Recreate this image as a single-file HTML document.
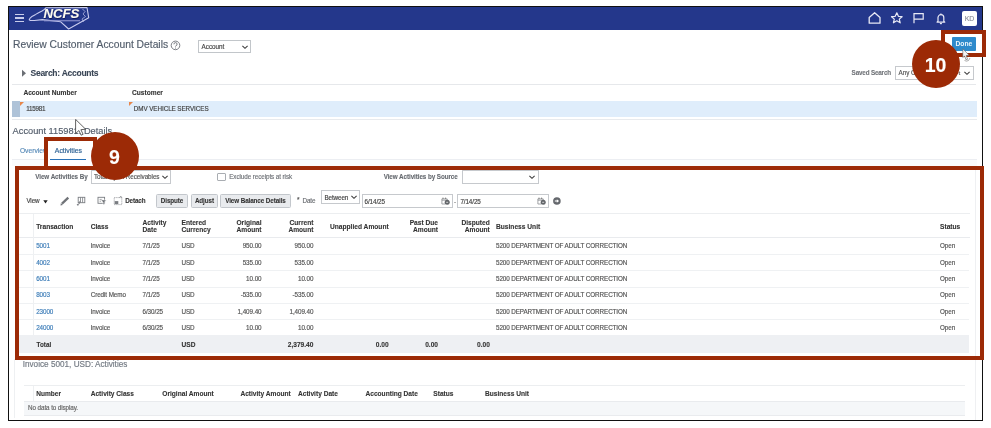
<!DOCTYPE html>
<html><head><meta charset="utf-8"><style>
html,body{margin:0;padding:0;}
body{width:991px;height:428px;overflow:hidden;position:relative;background:#fff;font-family:"Liberation Sans", sans-serif;}
.t{position:absolute;line-height:1;white-space:pre;-webkit-text-stroke:0.16px currentColor;}
#root{position:absolute;left:0;top:0;width:991px;height:428px;will-change:transform;}
.r{position:absolute;}
</style></head><body>
<div id="root">
<div class="r" style="left:8px;top:6px;width:975px;height:415px;border:1px solid #111;box-sizing:border-box;"></div>
<div class="r" style="left:9px;top:7px;width:973px;height:23px;background:#24378b;"></div>
<div class="r" style="left:14.6px;top:13.8px;width:9.9px;height:1.6px;background:#c9cdeb;"></div>
<div class="r" style="left:14.6px;top:17.3px;width:9.9px;height:1.6px;background:#c9cdeb;"></div>
<div class="r" style="left:14.6px;top:20.6px;width:9.9px;height:1.6px;background:#c9cdeb;"></div>
<svg class="r" style="left:26px;top:6px" width="66" height="25" viewBox="0 0 66 25">
<path d="M3.2 13.9 Q3.4 12.3 5.9 10.5 L9.7 8.4 L12.6 6.7 L16 5 L18.5 3.4 L19.8 1.8 L61 1.5 L62.7 11.7 L42.6 23 L34.7 15.8 L16.4 13.6 L8.4 14.5 Q4 14.8 3.2 13.9 Z" fill="none" stroke="#c9ccef" stroke-width="1.1" stroke-linejoin="round"/>
<path d="M56.5 3 L59 5.5 L57 8 L59.5 10.5 L56 13 L57.5 16" fill="none" stroke="#aeb3e0" stroke-width="0.8"/>
<rect x="18" y="14.2" width="36" height="1.1" fill="#8f96d0"/>
</svg>
<div class="t" style="left:43.60px;top:7.00px;font-size:13.3px;font-weight:bold;-webkit-text-stroke:0.1px currentColor;color:#ffffff;font-style:italic;text-shadow:0.5px 0.5px 0.8px #10195a;letter-spacing:-0.15px;color:#fdfbf0;">NCFS</div>
<svg class="r" style="left:866px;top:10px" width="85" height="17" viewBox="0 0 85 17">
<path d="M3.2 13.2 V7.6 L8.6 2.8 L14 7.6 V13.2 Z" fill="none" stroke="#e8e9f5" stroke-width="1.3" stroke-linejoin="round"/>
<path d="M30.8 2.8 L32.4 6.3 L36.1 6.7 L33.3 9.1 L34.2 12.8 L30.8 10.8 L27.4 12.8 L28.3 9.1 L25.5 6.7 L29.2 6.3 Z" fill="none" stroke="#e8e9f5" stroke-width="1.2" stroke-linejoin="round"/>
<path d="M48 13.2 V3.6 H57.2 V9.2 H48" fill="none" stroke="#e8e9f5" stroke-width="1.2"/>
<path d="M72 11.2 V7.6 A2.9 2.9 0 0 1 77.8 7.6 V11.2 L78.8 12.1 H71 Z" fill="none" stroke="#e8e9f5" stroke-width="1.2" stroke-linejoin="round"/>
<path d="M73.9 13.6 H75.9" stroke="#e8e9f5" stroke-width="1.2"/>
<path d="M74.9 3.4 V4.6" stroke="#e8e9f5" stroke-width="1.2"/>
</svg>
<div class="r" style="left:962px;top:10.8px;width:15px;height:14.8px;background:#fff;border-radius:2px;"></div>
<div class="t" style="left:969.50px;top:16.00px;font-size:6.9px;color:#8d909c;transform:translateX(-50%);">KD</div>
<div class="t" style="left:13.00px;top:40.00px;font-size:10.3px;color:#525d6b;">Review Customer Account Details</div>
<svg class="r" style="left:170.4px;top:40px" width="11" height="11" viewBox="0 0 11 11">
<circle cx="5.5" cy="5.4" r="4.3" fill="none" stroke="#6d7177" stroke-width="0.9"/>
<path d="M3.9 4.3 A1.6 1.6 0 1 1 5.8 5.8 Q5.5 6 5.5 6.6" fill="none" stroke="#6d7177" stroke-width="0.9"/>
<circle cx="5.5" cy="8" r="0.55" fill="#6d7177"/>
</svg>
<div class="r" style="left:198px;top:39.5px;width:52.5px;height:13.8px;border:1px solid #c2c6ca;box-sizing:border-box;background:#fff;"></div>
<div class="t" style="left:201.60px;top:44.00px;font-size:6.3px;color:#444;letter-spacing:-0.026px;">Account</div>
<svg class="r" style="left:241px;top:44px" width="8" height="6" viewBox="0 0 8 6"><path d="M1.4 1.8 L4 4.3 L6.6 1.8" fill="none" stroke="#3a3a3a" stroke-width="1.05"/></svg>
<svg class="r" style="left:21px;top:68.6px" width="6" height="9" viewBox="0 0 6 9"><path d="M1 0.8 L5 4.3 L1 7.8 Z" fill="#6b6f75"/></svg>
<div class="t" style="left:30.50px;top:69.00px;font-size:8.5px;font-weight:bold;-webkit-text-stroke:0.1px currentColor;color:#3a4656;letter-spacing:-0.26px;">Search: Accounts</div>
<div class="t" style="left:851.60px;top:70.00px;font-size:6.3px;font-weight:bold;-webkit-text-stroke:0.1px currentColor;color:#707378;letter-spacing:-0.164px;">Saved Search</div>
<div class="r" style="left:895px;top:66px;width:78.5px;height:13.7px;border:1px solid #c6c9cd;box-sizing:border-box;background:#fff;"></div>
<div class="t" style="left:898.60px;top:70.00px;font-size:6.3px;color:#555;letter-spacing:-0.054px;">Any C</div>
<div class="t" style="left:958.50px;top:70.00px;font-size:6.2px;color:#555;">t</div>
<svg class="r" style="left:963px;top:70px" width="8" height="6" viewBox="0 0 8 6"><path d="M1.4 1.8 L4 4.3 L6.6 1.8" fill="none" stroke="#3a3a3a" stroke-width="1.05"/></svg>
<div class="r" style="left:12px;top:83.8px;width:964px;height:1px;background:#e6e8eb;"></div>
<div class="t" style="left:23.40px;top:90.00px;font-size:6.64px;font-weight:bold;-webkit-text-stroke:0.1px currentColor;color:#333;">Account Number</div>
<div class="t" style="left:132.00px;top:90.00px;font-size:6.64px;font-weight:bold;-webkit-text-stroke:0.1px currentColor;color:#333;">Customer</div>
<div class="r" style="left:12px;top:100.5px;width:965px;height:16.5px;background:#dfedfb;"></div>
<div class="r" style="left:12px;top:100.5px;width:8px;height:16.5px;background:#afc3d8;"></div>
<svg class="r" style="left:20px;top:102px" width="4" height="4" viewBox="0 0 4 4"><path d="M0 0 H4 L0 4 Z" fill="#e8864a"/></svg>
<svg class="r" style="left:128.5px;top:102px" width="4" height="4" viewBox="0 0 4 4"><path d="M0 0 H4 L0 4 Z" fill="#e8864a"/></svg>
<div class="t" style="left:26.20px;top:106.00px;font-size:6.3px;color:#444;letter-spacing:-0.228px;">115981</div>
<div class="t" style="left:133.80px;top:106.00px;font-size:6.3px;color:#444;letter-spacing:-0.073px;">DMV VEHICLE SERVICES</div>
<div class="r" style="left:12px;top:119px;width:965px;height:1px;background:#e8eaed;"></div>
<div class="t" style="left:12.60px;top:127.00px;font-size:9.25px;color:#535d6b;">Account 115981: Details</div>
<div class="r" style="left:48px;top:141px;width:48px;height:25px;background:#fff;"></div>
<div class="t" style="left:19.90px;top:148.00px;font-size:6.7px;color:#5a8cb9;">Overview</div>
<div class="t" style="left:54.80px;top:148.00px;font-size:6.9px;color:#2f6396;-webkit-text-stroke:0.18px currentColor;">Activities</div>
<div class="r" style="left:50px;top:158.6px;width:36.4px;height:1.8px;background:#2a72b8;"></div>
<div class="r" style="left:12px;top:159px;width:32px;height:7px;background:#fafbfc;border-top:1px solid #eceef2;box-sizing:border-box;"></div>
<div class="r" style="left:96px;top:159px;width:881px;height:7px;background:#fafbfc;border-top:1px solid #eceef2;box-sizing:border-box;"></div>
<div class="t" style="left:35.20px;top:174.00px;font-size:6.3px;font-weight:bold;-webkit-text-stroke:0.1px currentColor;color:#65696f;letter-spacing:-0.061px;">View Activities By</div>
<div class="r" style="left:91.3px;top:170px;width:80.1px;height:13.6px;border:1px solid #c6c9cd;box-sizing:border-box;background:#fff;"></div>
<div class="t" style="left:94.00px;top:174.00px;font-size:6.3px;color:#555;letter-spacing:-0.048px;">Total Open Receivables</div>
<svg class="r" style="left:161px;top:174px" width="8" height="6" viewBox="0 0 8 6"><path d="M1.4 1.8 L4 4.3 L6.6 1.8" fill="none" stroke="#3a3a3a" stroke-width="1.05"/></svg>
<div class="r" style="left:217.3px;top:173px;width:8.7px;height:8.2px;border:1px solid #a9adb2;box-sizing:border-box;border-radius:1px;"></div>
<div class="t" style="left:229.20px;top:174.00px;font-size:6.3px;color:#6f7378;letter-spacing:-0.077px;">Exclude receipts at risk</div>
<div class="t" style="left:383.70px;top:174.00px;font-size:6.3px;font-weight:bold;-webkit-text-stroke:0.1px currentColor;color:#65696f;letter-spacing:-0.077px;">View Activities by Source</div>
<div class="r" style="left:461.8px;top:170px;width:77.3px;height:13.6px;border:1px solid #c6c9cd;box-sizing:border-box;background:#fff;"></div>
<svg class="r" style="left:528px;top:174px" width="8" height="6" viewBox="0 0 8 6"><path d="M1.4 1.8 L4 4.3 L6.6 1.8" fill="none" stroke="#3a3a3a" stroke-width="1.05"/></svg>
<div class="t" style="left:26.40px;top:198.00px;font-size:6.3px;color:#444;letter-spacing:-0.107px;">View</div>
<svg class="r" style="left:43px;top:200px" width="5" height="4" viewBox="0 0 5 4"><path d="M0.3 0.3 H4.7 L2.5 3.4 Z" fill="#222"/></svg>
<svg class="r" style="left:59px;top:196px" width="70" height="11" viewBox="0 0 70 11">
<path d="M3 7.6 L9.3 1.6" stroke="#707378" stroke-width="2.3"/>
<path d="M1.5 9.4 L1.9 7 L3.9 8.9 Z" fill="#707378"/>
<rect x="19.2" y="1.3" width="6.6" height="5.4" fill="none" stroke="#7a7d82" stroke-width="0.9"/>
<path d="M21.5 1.3 V6.7 M23.6 1.3 V6.7" stroke="#7a7d82" stroke-width="0.8"/>
<path d="M21 5 Q21 8.6 18.3 8.8" fill="none" stroke="#7a7d82" stroke-width="0.9"/>
<path d="M17.6 8.8 L19.3 7.6 L19.3 10 Z" fill="#7a7d82"/>
<rect x="39" y="1.3" width="6.6" height="6" fill="none" stroke="#7a7d82" stroke-width="0.9"/>
<path d="M40.6 3.4 H43.2 M40.6 5.2 H42" stroke="#7a7d82" stroke-width="0.7"/>
<path d="M42 3.9 H47.3 L45.3 6.2 V8.6 H44 V6.2 Z" fill="#6d7075" stroke="#fff" stroke-width="0.5"/>
<rect x="55.2" y="1.6" width="7.6" height="7" fill="none" stroke="#8a8d92" stroke-width="0.8" stroke-dasharray="1.2 0.9"/>
<rect x="55.7" y="5.1" width="3.6" height="3" fill="#7a7d82"/>
<path d="M60.3 1.6 L63 -0.5 M61.5 0.2 L63.2 2" stroke="#7a7d82" stroke-width="0.6"/>
</svg>
<div class="t" style="left:125.20px;top:198.00px;font-size:6.3px;font-weight:bold;-webkit-text-stroke:0.1px currentColor;color:#333;letter-spacing:-0.133px;">Detach</div>
<div class="r" style="left:156.3px;top:194.3px;width:31.4px;height:14.1px;border:1px solid #c3c7cc;box-sizing:border-box;background:#e9ebee;border-radius:1.5px;"></div>
<div class="t" style="left:172.00px;top:198.00px;font-size:6.3px;font-weight:bold;-webkit-text-stroke:0.1px currentColor;color:#333;letter-spacing:-0.105px;transform:translateX(-50%);white-space:nowrap;">Dispute</div>
<div class="r" style="left:190.5px;top:194.3px;width:27.8px;height:14.1px;border:1px solid #c3c7cc;box-sizing:border-box;background:#e9ebee;border-radius:1.5px;"></div>
<div class="t" style="left:204.40px;top:198.00px;font-size:6.3px;font-weight:bold;-webkit-text-stroke:0.1px currentColor;color:#333;letter-spacing:-0.104px;transform:translateX(-50%);white-space:nowrap;">Adjust</div>
<div class="r" style="left:220.4px;top:194.3px;width:70.2px;height:14.1px;border:1px solid #c3c7cc;box-sizing:border-box;background:#e9ebee;border-radius:1.5px;"></div>
<div class="t" style="left:255.50px;top:198.00px;font-size:6.3px;font-weight:bold;-webkit-text-stroke:0.1px currentColor;color:#333;letter-spacing:-0.099px;transform:translateX(-50%);white-space:nowrap;">View Balance Details</div>
<div class="t" style="left:297.00px;top:197.00px;font-size:6.5px;color:#555;">*</div>
<div class="t" style="left:302.60px;top:198.00px;font-size:6.3px;color:#6a6d72;letter-spacing:-0.158px;">Date</div>
<div class="r" style="left:321.3px;top:190.2px;width:38.3px;height:14.2px;border:1px solid #c6c9cd;box-sizing:border-box;background:#fff;"></div>
<div class="t" style="left:324.50px;top:195.00px;font-size:6.3px;color:#444;letter-spacing:-0.111px;">Between</div>
<svg class="r" style="left:350px;top:194px" width="8" height="6" viewBox="0 0 8 6"><path d="M1.4 1.8 L4 4.3 L6.6 1.8" fill="none" stroke="#3a3a3a" stroke-width="1.05"/></svg>
<div class="r" style="left:361.6px;top:194.3px;width:91.1px;height:14.1px;border:1px solid #c6c9cd;box-sizing:border-box;background:#fff;"></div>
<div class="t" style="left:364.50px;top:199.00px;font-size:6.3px;color:#444;letter-spacing:-0.095px;">6/14/25</div>
<div class="r" style="left:457.2px;top:194.3px;width:91.4px;height:14.1px;border:1px solid #c6c9cd;box-sizing:border-box;background:#fff;"></div>
<div class="t" style="left:460.40px;top:199.00px;font-size:6.3px;color:#444;letter-spacing:-0.095px;">7/14/25</div>
<div class="t" style="left:454.00px;top:199.00px;font-size:6.1px;color:#555;">-</div>
<svg class="r" style="left:440.5px;top:197px" width="10" height="10" viewBox="0 0 10 10"><path d="M4.2 7 H0.9 V1.9 H6.2 V3.2" fill="none" stroke="#8a8d92" stroke-width="0.8"/><path d="M0.9 3.2 H6.2" stroke="#8a8d92" stroke-width="0.8"/><path d="M2 0.6 V2 M4.6 0.6 V2" stroke="#777" stroke-width="0.9"/><circle cx="6.2" cy="5.2" r="2.5" fill="#626569"/><path d="M5.2 5.3 H7.2" stroke="#fff" stroke-width="0.7"/></svg>
<svg class="r" style="left:536.5px;top:197px" width="10" height="10" viewBox="0 0 10 10"><path d="M4.2 7 H0.9 V1.9 H6.2 V3.2" fill="none" stroke="#8a8d92" stroke-width="0.8"/><path d="M0.9 3.2 H6.2" stroke="#8a8d92" stroke-width="0.8"/><path d="M2 0.6 V2 M4.6 0.6 V2" stroke="#777" stroke-width="0.9"/><circle cx="6.2" cy="5.2" r="2.5" fill="#626569"/><path d="M5.2 5.3 H7.2" stroke="#fff" stroke-width="0.7"/></svg>
<svg class="r" style="left:553px;top:197px" width="8" height="8" viewBox="0 0 8 8"><circle cx="3.9" cy="4" r="3.8" fill="#65686d"/><path d="M1.8 4 H4.8" stroke="#fff" stroke-width="1.1"/><path d="M3.8 2.2 L6.1 4 L3.8 5.8 Z" fill="#fff"/></svg>
<div class="r" style="left:19px;top:213.2px;width:951px;height:1px;background:#eceef0;"></div>
<div class="r" style="left:19px;top:237.3px;width:951px;height:1px;background:#e9ebee;"></div>
<div class="r" style="left:33.2px;top:214px;width:1px;height:121px;background:#eef0f2;"></div>
<div class="t" style="left:36.20px;top:224.00px;font-size:6.64px;font-weight:bold;-webkit-text-stroke:0.1px currentColor;color:#333;">Transaction</div>
<div class="t" style="left:90.70px;top:224.00px;font-size:6.64px;font-weight:bold;-webkit-text-stroke:0.1px currentColor;color:#333;">Class</div>
<div class="t" style="left:142.50px;top:220.00px;font-size:6.64px;font-weight:bold;-webkit-text-stroke:0.1px currentColor;color:#333;">Activity</div>
<div class="t" style="left:142.50px;top:227.00px;font-size:6.64px;font-weight:bold;-webkit-text-stroke:0.1px currentColor;color:#333;">Date</div>
<div class="t" style="left:181.50px;top:220.00px;font-size:6.64px;font-weight:bold;-webkit-text-stroke:0.1px currentColor;color:#333;">Entered</div>
<div class="t" style="left:181.50px;top:227.00px;font-size:6.64px;font-weight:bold;-webkit-text-stroke:0.1px currentColor;color:#333;">Currency</div>
<div class="t" style="right:729.50px;top:220.00px;font-size:6.64px;font-weight:bold;-webkit-text-stroke:0.1px currentColor;color:#333;">Original</div>
<div class="t" style="right:729.50px;top:227.00px;font-size:6.64px;font-weight:bold;-webkit-text-stroke:0.1px currentColor;color:#333;">Amount</div>
<div class="t" style="right:677.60px;top:220.00px;font-size:6.64px;font-weight:bold;-webkit-text-stroke:0.1px currentColor;color:#333;">Current</div>
<div class="t" style="right:677.60px;top:227.00px;font-size:6.64px;font-weight:bold;-webkit-text-stroke:0.1px currentColor;color:#333;">Amount</div>
<div class="t" style="left:330.00px;top:224.00px;font-size:6.64px;font-weight:bold;-webkit-text-stroke:0.1px currentColor;color:#333;">Unapplied Amount</div>
<div class="t" style="right:553.00px;top:220.00px;font-size:6.64px;font-weight:bold;-webkit-text-stroke:0.1px currentColor;color:#333;">Past Due</div>
<div class="t" style="right:553.00px;top:227.00px;font-size:6.64px;font-weight:bold;-webkit-text-stroke:0.1px currentColor;color:#333;">Amount</div>
<div class="t" style="right:501.20px;top:220.00px;font-size:6.64px;font-weight:bold;-webkit-text-stroke:0.1px currentColor;color:#333;">Disputed</div>
<div class="t" style="right:501.20px;top:227.00px;font-size:6.64px;font-weight:bold;-webkit-text-stroke:0.1px currentColor;color:#333;">Amount</div>
<div class="t" style="left:496.00px;top:224.00px;font-size:6.64px;font-weight:bold;-webkit-text-stroke:0.1px currentColor;color:#333;">Business Unit</div>
<div class="t" style="left:940.00px;top:224.00px;font-size:6.64px;font-weight:bold;-webkit-text-stroke:0.1px currentColor;color:#333;">Status</div>
<div class="t" style="left:36.20px;top:243.00px;font-size:6.3px;color:#3d7db8;letter-spacing:-0.083px;">5001</div>
<div class="t" style="left:90.70px;top:243.00px;font-size:6.3px;color:#555;letter-spacing:-0.068px;">Invoice</div>
<div class="t" style="left:142.50px;top:243.00px;font-size:6.3px;color:#555;letter-spacing:-0.070px;">7/1/25</div>
<div class="t" style="left:181.50px;top:243.00px;font-size:6.3px;color:#555;letter-spacing:-0.106px;">USD</div>
<div class="t" style="right:729.50px;top:243.00px;font-size:6.3px;color:#555;letter-spacing:-0.076px;">950.00</div>
<div class="t" style="right:677.60px;top:243.00px;font-size:6.3px;color:#555;letter-spacing:-0.076px;">950.00</div>
<div class="t" style="left:496.00px;top:243.00px;font-size:6.3px;color:#555;letter-spacing:-0.092px;">5200 DEPARTMENT OF ADULT CORRECTION</div>
<div class="t" style="left:940.00px;top:243.00px;font-size:6.3px;color:#555;letter-spacing:-0.092px;">Open</div>
<div class="r" style="left:19px;top:253.8px;width:950px;height:1px;background:#eff1f3;"></div>
<div class="t" style="left:36.20px;top:260.00px;font-size:6.3px;color:#3d7db8;letter-spacing:-0.083px;">4002</div>
<div class="t" style="left:90.70px;top:260.00px;font-size:6.3px;color:#555;letter-spacing:-0.068px;">Invoice</div>
<div class="t" style="left:142.50px;top:260.00px;font-size:6.3px;color:#555;letter-spacing:-0.070px;">7/1/25</div>
<div class="t" style="left:181.50px;top:260.00px;font-size:6.3px;color:#555;letter-spacing:-0.106px;">USD</div>
<div class="t" style="right:729.50px;top:260.00px;font-size:6.3px;color:#555;letter-spacing:-0.076px;">535.00</div>
<div class="t" style="right:677.60px;top:260.00px;font-size:6.3px;color:#555;letter-spacing:-0.076px;">535.00</div>
<div class="t" style="left:496.00px;top:260.00px;font-size:6.3px;color:#555;letter-spacing:-0.092px;">5200 DEPARTMENT OF ADULT CORRECTION</div>
<div class="t" style="left:940.00px;top:260.00px;font-size:6.3px;color:#555;letter-spacing:-0.092px;">Open</div>
<div class="r" style="left:19px;top:270.2px;width:950px;height:1px;background:#eff1f3;"></div>
<div class="t" style="left:36.20px;top:276.00px;font-size:6.3px;color:#3d7db8;letter-spacing:-0.083px;">6001</div>
<div class="t" style="left:90.70px;top:276.00px;font-size:6.3px;color:#555;letter-spacing:-0.068px;">Invoice</div>
<div class="t" style="left:142.50px;top:276.00px;font-size:6.3px;color:#555;letter-spacing:-0.070px;">7/1/25</div>
<div class="t" style="left:181.50px;top:276.00px;font-size:6.3px;color:#555;letter-spacing:-0.106px;">USD</div>
<div class="t" style="right:729.50px;top:276.00px;font-size:6.3px;color:#555;letter-spacing:-0.075px;">10.00</div>
<div class="t" style="right:677.60px;top:276.00px;font-size:6.3px;color:#555;letter-spacing:-0.075px;">10.00</div>
<div class="t" style="left:496.00px;top:276.00px;font-size:6.3px;color:#555;letter-spacing:-0.092px;">5200 DEPARTMENT OF ADULT CORRECTION</div>
<div class="t" style="left:940.00px;top:276.00px;font-size:6.3px;color:#555;letter-spacing:-0.092px;">Open</div>
<div class="r" style="left:19px;top:286.6px;width:950px;height:1px;background:#eff1f3;"></div>
<div class="t" style="left:36.20px;top:292.00px;font-size:6.3px;color:#3d7db8;letter-spacing:-0.083px;">8003</div>
<div class="t" style="left:90.70px;top:292.00px;font-size:6.3px;color:#555;letter-spacing:-0.078px;">Credit Memo</div>
<div class="t" style="left:142.50px;top:292.00px;font-size:6.3px;color:#555;letter-spacing:-0.070px;">7/1/25</div>
<div class="t" style="left:181.50px;top:292.00px;font-size:6.3px;color:#555;letter-spacing:-0.106px;">USD</div>
<div class="t" style="right:729.50px;top:292.00px;font-size:6.3px;color:#555;letter-spacing:-0.073px;">-535.00</div>
<div class="t" style="right:677.60px;top:292.00px;font-size:6.3px;color:#555;letter-spacing:-0.073px;">-535.00</div>
<div class="t" style="left:496.00px;top:292.00px;font-size:6.3px;color:#555;letter-spacing:-0.092px;">5200 DEPARTMENT OF ADULT CORRECTION</div>
<div class="t" style="left:940.00px;top:292.00px;font-size:6.3px;color:#555;letter-spacing:-0.092px;">Open</div>
<div class="r" style="left:19px;top:303px;width:950px;height:1px;background:#eff1f3;"></div>
<div class="t" style="left:36.20px;top:309.00px;font-size:6.3px;color:#3d7db8;letter-spacing:-0.083px;">23000</div>
<div class="t" style="left:90.70px;top:309.00px;font-size:6.3px;color:#555;letter-spacing:-0.068px;">Invoice</div>
<div class="t" style="left:142.50px;top:309.00px;font-size:6.3px;color:#555;letter-spacing:-0.071px;">6/30/25</div>
<div class="t" style="left:181.50px;top:309.00px;font-size:6.3px;color:#555;letter-spacing:-0.106px;">USD</div>
<div class="t" style="right:729.50px;top:309.00px;font-size:6.3px;color:#555;letter-spacing:-0.073px;">1,409.40</div>
<div class="t" style="right:677.60px;top:309.00px;font-size:6.3px;color:#555;letter-spacing:-0.073px;">1,409.40</div>
<div class="t" style="left:496.00px;top:309.00px;font-size:6.3px;color:#555;letter-spacing:-0.092px;">5200 DEPARTMENT OF ADULT CORRECTION</div>
<div class="t" style="left:940.00px;top:309.00px;font-size:6.3px;color:#555;letter-spacing:-0.092px;">Open</div>
<div class="r" style="left:19px;top:319.4px;width:950px;height:1px;background:#eff1f3;"></div>
<div class="t" style="left:36.20px;top:325.00px;font-size:6.3px;color:#3d7db8;letter-spacing:-0.083px;">24000</div>
<div class="t" style="left:90.70px;top:325.00px;font-size:6.3px;color:#555;letter-spacing:-0.068px;">Invoice</div>
<div class="t" style="left:142.50px;top:325.00px;font-size:6.3px;color:#555;letter-spacing:-0.071px;">6/30/25</div>
<div class="t" style="left:181.50px;top:325.00px;font-size:6.3px;color:#555;letter-spacing:-0.106px;">USD</div>
<div class="t" style="right:729.50px;top:325.00px;font-size:6.3px;color:#555;letter-spacing:-0.075px;">10.00</div>
<div class="t" style="right:677.60px;top:325.00px;font-size:6.3px;color:#555;letter-spacing:-0.075px;">10.00</div>
<div class="t" style="left:496.00px;top:325.00px;font-size:6.3px;color:#555;letter-spacing:-0.092px;">5200 DEPARTMENT OF ADULT CORRECTION</div>
<div class="t" style="left:940.00px;top:325.00px;font-size:6.3px;color:#555;letter-spacing:-0.092px;">Open</div>
<div class="r" style="left:19px;top:335px;width:950px;height:17.6px;background:#eef0f3;"></div>
<div class="t" style="left:36.60px;top:342.00px;font-size:6.31px;font-weight:bold;-webkit-text-stroke:0.1px currentColor;color:#333;">Total</div>
<div class="t" style="left:181.50px;top:342.00px;font-size:6.6px;font-weight:bold;-webkit-text-stroke:0.1px currentColor;color:#333;">USD</div>
<div class="t" style="right:677.60px;top:342.00px;font-size:6.6px;font-weight:bold;-webkit-text-stroke:0.1px currentColor;color:#333;">2,379.40</div>
<div class="t" style="right:602.30px;top:342.00px;font-size:6.6px;font-weight:bold;-webkit-text-stroke:0.1px currentColor;color:#333;">0.00</div>
<div class="t" style="right:553.00px;top:342.00px;font-size:6.6px;font-weight:bold;-webkit-text-stroke:0.1px currentColor;color:#333;">0.00</div>
<div class="t" style="right:501.20px;top:342.00px;font-size:6.6px;font-weight:bold;-webkit-text-stroke:0.1px currentColor;color:#333;">0.00</div>
<div class="r" style="left:975px;top:170px;width:1px;height:250px;background:#eff0f2;"></div>
<div class="r" style="left:14px;top:359px;width:1px;height:59px;background:#eef0f2;"></div>
<div class="t" style="left:22.70px;top:361.00px;font-size:8.2px;color:#737a83;">Invoice 5001, USD: Activities</div>
<div class="r" style="left:24px;top:385px;width:941px;height:1px;background:#eceef0;"></div>
<div class="r" style="left:33.2px;top:386px;width:1px;height:15px;background:#eef0f2;"></div>
<div class="t" style="left:36.20px;top:391.00px;font-size:6.56px;font-weight:bold;-webkit-text-stroke:0.1px currentColor;color:#333;">Number</div>
<div class="t" style="left:90.70px;top:391.00px;font-size:6.6px;font-weight:bold;-webkit-text-stroke:0.1px currentColor;color:#333;">Activity Class</div>
<div class="t" style="left:162.30px;top:391.00px;font-size:6.6px;font-weight:bold;-webkit-text-stroke:0.1px currentColor;color:#333;">Original Amount</div>
<div class="t" style="left:240.40px;top:391.00px;font-size:6.6px;font-weight:bold;-webkit-text-stroke:0.1px currentColor;color:#333;">Activity Amount</div>
<div class="t" style="left:298.00px;top:391.00px;font-size:6.6px;font-weight:bold;-webkit-text-stroke:0.1px currentColor;color:#333;">Activity Date</div>
<div class="t" style="left:365.50px;top:391.00px;font-size:6.6px;font-weight:bold;-webkit-text-stroke:0.1px currentColor;color:#333;">Accounting Date</div>
<div class="t" style="left:433.30px;top:391.00px;font-size:6.6px;font-weight:bold;-webkit-text-stroke:0.1px currentColor;color:#333;">Status</div>
<div class="t" style="left:485.00px;top:391.00px;font-size:6.6px;font-weight:bold;-webkit-text-stroke:0.1px currentColor;color:#333;">Business Unit</div>
<div class="r" style="left:24px;top:401px;width:941px;height:1px;background:#e9ebee;"></div>
<div class="r" style="left:24px;top:402px;width:941px;height:12.5px;background:#f5f7f9;"></div>
<div class="r" style="left:24px;top:414.5px;width:941px;height:1px;background:#e9ebee;"></div>
<div class="t" style="left:28.10px;top:405.00px;font-size:6.3px;color:#666;letter-spacing:-0.095px;">No data to display.</div>
<svg class="r" style="left:75px;top:119px" width="14" height="18" viewBox="0 0 14 18">
<path d="M0.6 0.4 L0.6 14.6 L3.9 11.5 L6.1 16.2 L8.1 15.3 L5.9 10.7 L10.6 10.2 Z" fill="#fff" stroke="#3a3a3a" stroke-width="0.8" stroke-linejoin="round"/>
</svg>
<div class="r" style="left:15px;top:166px;width:969px;height:194px;border:4px solid #9c2a06;box-sizing:border-box;"></div>
<div class="r" style="left:44px;top:137px;width:53px;height:33px;border:4px solid #9c2a06;box-sizing:border-box;border-bottom:none;"></div>
<div class="r" style="left:941px;top:30px;width:45px;height:27px;border:4px solid #9c2a06;box-sizing:border-box;"></div>
<div class="r" style="left:951.7px;top:36.9px;width:24.3px;height:14.1px;background:#2e8acb;border-radius:1px;"></div>
<div class="t" style="left:963.90px;top:41.00px;font-size:6.7px;font-weight:bold;-webkit-text-stroke:0.1px currentColor;color:#eef6fc;transform:translateX(-50%);-webkit-text-stroke:0;">Done</div>
<svg class="r" style="left:961px;top:48px" width="12" height="15" viewBox="0 0 12 15">
<path d="M1.8 0.8 L1.8 9.5 L3.6 8 L5 11.8 L6.6 11.2 L5.2 7.5 L8.2 7.3 Z" fill="#f4f4f4" stroke="#555" stroke-width="0.55" stroke-linejoin="round"/>
<path d="M3.5 12.5 Q5.5 13.8 7.5 12.5 L9 10" fill="none" stroke="#777" stroke-width="0.6"/>
</svg>
<div class="r" style="left:90.5px;top:131.8px;width:48px;height:48px;background:#9c2a06;border-radius:50%;"></div>
<div class="t" style="left:114.50px;top:148.00px;font-size:19.5px;font-weight:bold;-webkit-text-stroke:0.1px currentColor;color:#fff;transform:translateX(-50%);">9</div>
<div class="r" style="left:911.6px;top:40.3px;width:48px;height:48px;background:#9c2a06;border-radius:50%;"></div>
<div class="t" style="left:935.60px;top:56.00px;font-size:19.5px;font-weight:bold;-webkit-text-stroke:0.1px currentColor;color:#fff;transform:translateX(-50%);">10</div>
</div></body></html>
